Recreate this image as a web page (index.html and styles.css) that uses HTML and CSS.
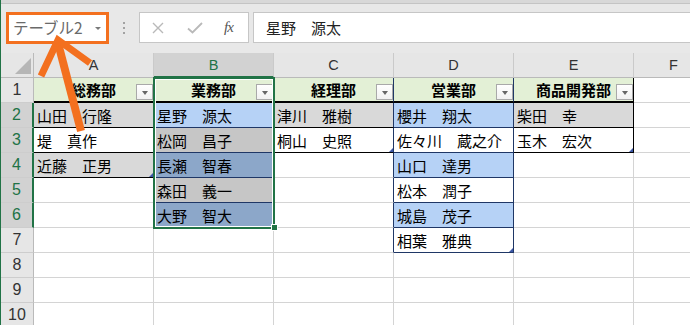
FILE: index.html
```html
<!DOCTYPE html>
<html lang="ja">
<head>
<meta charset="utf-8">
<title>テーブル2</title>
<link rel="stylesheet" href="styles.css">
</head>
<body>
<div class="app">
  <div class="topstrip"></div>
  <div class="toolbar">
    <div class="namebox"><span class="nb-text">テーブル2</span><span class="nb-caret"></span></div>
    <div class="grip"><i></i><i></i><i></i></div>
    <div class="fbuttons">
      <svg class="ico-x" width="12" height="12" viewBox="0 0 12 12"><path d="M1 1 L11 11 M11 1 L1 11" stroke="#b9b9b9" stroke-width="1.4" fill="none"/></svg>
      <svg class="ico-ok" width="16" height="12" viewBox="0 0 16 12"><path d="M1 6.5 L5.5 10.5 L15 1" stroke="#b9b9b9" stroke-width="1.8" fill="none"/></svg>
      <span class="fx">fx</span>
    </div>
    <div class="finput">星野　源太</div>
  </div>

  <div class="sheet">
    <div class="corner"><span class="corner-tri"></span></div>
    <div class="hdr-col">A</div>
    <div class="hdr-col on">B</div>
    <div class="hdr-col">C</div>
    <div class="hdr-col">D</div>
    <div class="hdr-col">E</div>
    <div class="hdr-col">F</div>

    <div class="hdr-row">1</div>
    <div class="cell tbl-head edge-k"><span class="label">総務部</span><span class="filter"></span></div>
    <div class="cell tbl-head"><span class="label">業務部</span><span class="filter"></span></div>
    <div class="cell tbl-head edge-n"><span class="label">経理部</span><span class="filter"></span></div>
    <div class="cell tbl-head edge-n"><span class="label">営業部</span><span class="filter"></span></div>
    <div class="cell tbl-head edge-k"><span class="label">商品開発部</span><span class="filter"></span></div>
    <div class="cell"></div>

    <div class="hdr-row on">2</div>
    <div class="cell gray line-k edge-k">山田　行隆</div>
    <div class="cell blue line-n">星野　源太</div>
    <div class="cell gray line-k edge-n">津川　雅樹</div>
    <div class="cell blue line-n edge-n">櫻井　翔太</div>
    <div class="cell gray line-k edge-k">柴田　幸</div>
    <div class="cell"></div>

    <div class="hdr-row on">3</div>
    <div class="cell line-k edge-k">堤　真作</div>
    <div class="cell shade line-n">松岡　昌子</div>
    <div class="cell line-k edge-n end-mark">桐山　史照</div>
    <div class="cell line-n edge-n">佐々川　蔵之介</div>
    <div class="cell line-k edge-k end-mark">玉木　宏次</div>
    <div class="cell"></div>

    <div class="hdr-row on">4</div>
    <div class="cell gray line-k edge-k end-mark">近藤　正男</div>
    <div class="cell shade-blue line-n">長瀬　智春</div>
    <div class="cell edge-n"></div>
    <div class="cell blue line-n edge-n">山口　達男</div>
    <div class="cell"></div>
    <div class="cell"></div>

    <div class="hdr-row on">5</div>
    <div class="cell"></div>
    <div class="cell shade line-n">森田　義一</div>
    <div class="cell edge-n"></div>
    <div class="cell line-n edge-n">松本　潤子</div>
    <div class="cell"></div>
    <div class="cell"></div>

    <div class="hdr-row on">6</div>
    <div class="cell"></div>
    <div class="cell shade-blue line-n">大野　智大</div>
    <div class="cell edge-n"></div>
    <div class="cell blue line-n edge-n">城島　茂子</div>
    <div class="cell"></div>
    <div class="cell"></div>

    <div class="hdr-row">7</div>
    <div class="cell"></div>
    <div class="cell"></div>
    <div class="cell edge-n"></div>
    <div class="cell line-n edge-n end-mark">相葉　雅典</div>
    <div class="cell"></div>
    <div class="cell"></div>

    <div class="hdr-row">8</div>
    <div class="cell"></div><div class="cell"></div><div class="cell"></div><div class="cell"></div><div class="cell"></div><div class="cell"></div>

    <div class="hdr-row">9</div>
    <div class="cell"></div><div class="cell"></div><div class="cell"></div><div class="cell"></div><div class="cell"></div><div class="cell"></div>

    <div class="hdr-row">10</div>
    <div class="cell"></div><div class="cell"></div><div class="cell"></div><div class="cell"></div><div class="cell"></div><div class="cell"></div>

    <div class="selection"><span class="fill-handle"></span></div>
  </div>

  <svg class="arrow" width="690" height="325" viewBox="0 0 690 325">
    <line x1="58" y1="43" x2="81" y2="131" stroke="#f3701f" stroke-width="8"/>
    <polyline points="41,76 58,40 90,63" fill="none" stroke="#f3701f" stroke-width="7" stroke-linejoin="miter"/>
  </svg>
</div>
</body>
</html>
```

FILE: styles.css
```css
* { box-sizing: border-box; }

html, body {
  margin: 0;
  padding: 0;
}

body {
  width: 690px;
  height: 325px;
  overflow: hidden;
  background: #ffffff;
  font-family: "Noto Sans CJK JP", "Noto Sans", sans-serif;
}

.app {
  position: relative;
  width: 690px;
  height: 325px;
  overflow: hidden;
  border-left: 1px solid #217346;
  background: #e8e8e8;
}

.topstrip {
  height: 4px;
  background: #d8d8d8;
  border-bottom: 1px solid #c4c4c4;
}

/* ---------- formula bar ---------- */
.toolbar {
  height: 49px;
  display: flex;
  align-items: flex-start;
  padding: 8px 0 0 5px;
}

.namebox {
  width: 103px;
  height: 32px;
  flex: 0 0 auto;
  border: 3px solid #f3701f;
  background: #ffffff;
  display: flex;
  align-items: center;
  padding-left: 4px;
}

.nb-text {
  font-size: 15.5px;
  color: #6a6a6a;
  line-height: 1;
}

.nb-caret {
  margin-left: auto;
  margin-right: 5px;
  width: 0;
  height: 0;
  border-left: 3px solid transparent;
  border-right: 3px solid transparent;
  border-top: 3px solid #7a7a7a;
}

.grip {
  display: flex;
  flex-direction: column;
  gap: 3px;
  margin: 10px 0 0 14px;
}

.grip i {
  display: block;
  width: 2px;
  height: 2px;
  background: #a2a2a2;
}

.fbuttons {
  flex: 0 0 auto;
  margin-left: 14px;
  width: 110px;
  height: 31px;
  background: #ffffff;
  border: 1px solid #c6c6c6;
  display: flex;
  align-items: center;
  padding-left: 12px;
}

.ico-x { display: block; }
.ico-ok { display: block; margin-left: 23px; }

.fx {
  margin-left: 21px;
  font-family: "Liberation Serif", serif;
  font-style: italic;
  font-size: 15px;
  color: #555555;
  letter-spacing: -1px;
  line-height: 1;
}

.finput {
  flex: 0 0 auto;
  margin-left: 4px;
  width: 460px;
  height: 31px;
  background: #ffffff;
  border: 1px solid #c6c6c6;
  padding-left: 12px;
  font-size: 15px;
  line-height: 29px;
  color: #222222;
  white-space: nowrap;
}

/* ---------- sheet ---------- */
.sheet {
  position: relative;
  display: grid;
  grid-template-columns: 33px repeat(5, 120px) 80px;
  grid-template-rows: repeat(11, 25px);
  background: #ffffff;
}

.corner {
  background: #e6e6e6;
  border-right: 1px solid #bababa;
  border-bottom: 1px solid #bababa;
  position: relative;
}

.corner-tri {
  position: absolute;
  right: 2px;
  bottom: 3px;
  width: 0;
  height: 0;
  border-left: 16px solid transparent;
  border-bottom: 16px solid #b6b6b6;
}

.hdr-col {
  background: #e6e6e6;
  border-right: 1px solid #cacaca;
  border-bottom: 1px solid #bababa;
  display: flex;
  align-items: center;
  justify-content: center;
  font-family: "Liberation Sans", Arial, sans-serif;
  font-size: 14.5px;
  color: #333333;
}

.hdr-col.on {
  background: #d2d2d2;
  color: #217346;
  border-bottom: 2px solid #217346;
}

.hdr-row {
  background: #e6e6e6;
  border-right: 1px solid #bababa;
  border-bottom: 1px solid #cdcdcd;
  display: flex;
  align-items: center;
  justify-content: center;
  font-family: "Liberation Sans", Arial, sans-serif;
  font-size: 16px;
  color: #333333;
}

.hdr-row.on {
  background: #d2d2d2;
  color: #217346;
  border-right: 2px solid #217346;
}

.cell {
  position: relative;
  border-right: 1px solid #d4d4d4;
  border-bottom: 1px solid #d4d4d4;
  display: flex;
  align-items: center;
  padding-left: 3px;
  font-size: 15px;
  color: #000000;
  white-space: nowrap;
  overflow: hidden;
}

/* table parts */
.tbl-head {
  display: grid;
  padding: 0;
  background: #e3f0d6;
  border-bottom: 2px solid #000000;
  font-weight: 700;
}

.tbl-head .label {
  grid-area: 1 / 1;
  justify-self: center;
  align-self: center;
}

.tbl-head .filter {
  grid-area: 1 / 1;
  justify-self: end;
  align-self: end;
  margin-bottom: 1px;
  width: 17px;
  height: 16px;
  border: 1px solid #a9a9a9;
  background: linear-gradient(#ffffff, #f1f1f1);
  display: flex;
  align-items: center;
  justify-content: center;
}

.tbl-head .filter::after {
  content: "";
  width: 0;
  height: 0;
  margin-top: 1px;
  border-left: 3px solid transparent;
  border-right: 3px solid transparent;
  border-top: 4px solid #666666;
}

.gray { background: #d9d9d9; }
.blue { background: #b6d2f6; }
.shade { background: #c6c6c6; }
.shade-blue { background: #8ca7c9; }

.line-k { border-bottom-color: #000000; }
.line-n { border-bottom-color: #1f3766; }
.edge-k { border-right-color: #000000; }
.edge-n { border-right-color: #1f3766; }

.end-mark::after {
  content: "";
  position: absolute;
  right: 0;
  bottom: 0;
  width: 0;
  height: 0;
  border-left: 4px solid transparent;
  border-bottom: 4px solid #3b56a6;
}

/* selection rectangle over B1:B6 (absolutely placed in its grid area) */
.selection {
  position: absolute;
  grid-column: 3 / 4;
  grid-row: 2 / 8;
  top: -1px;
  left: -1px;
  right: -1px;
  bottom: -1px;
  border: 2px solid #217346;
  box-shadow: inset 0 0 0 1px #ffffff;
  z-index: 1;
  pointer-events: none;
}

.fill-handle {
  position: absolute;
  right: -5px;
  bottom: -4px;
  width: 7px;
  height: 7px;
  background: #217346;
  border: 1px solid #ffffff;
}

/* annotation arrow */
.arrow {
  position: absolute;
  left: -1px;
  top: 0;
  pointer-events: none;
}
```
